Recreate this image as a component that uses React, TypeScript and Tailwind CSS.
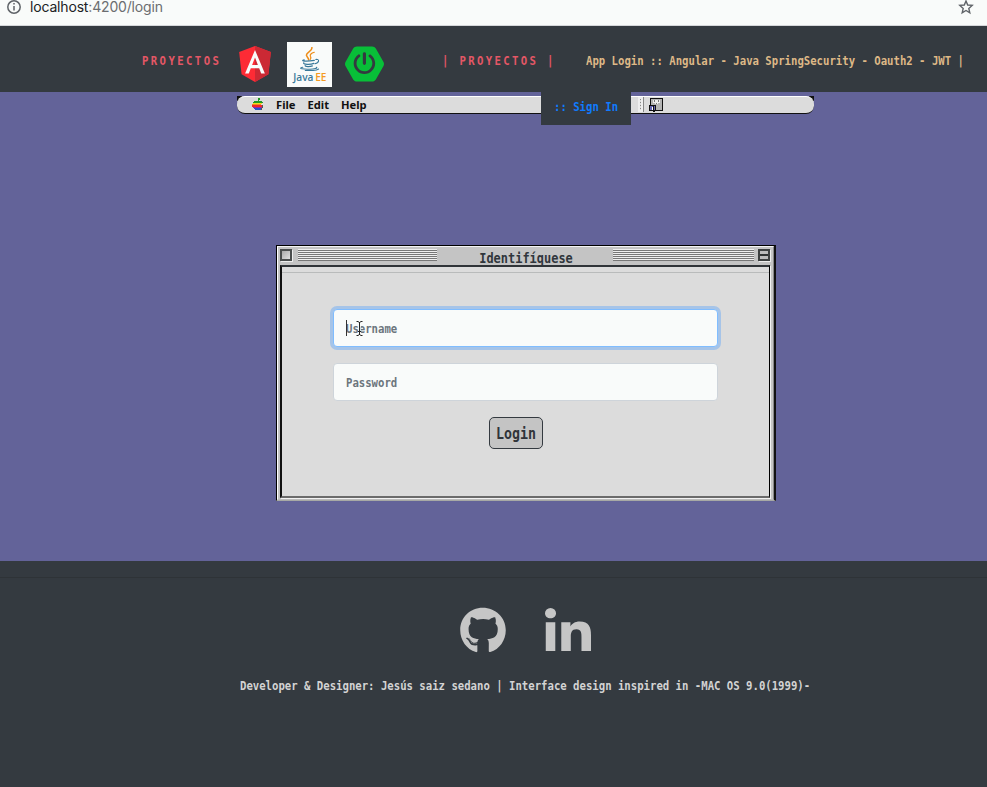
import { ReactNode } from "react";
import { FaGithub, FaLinkedinIn } from "react-icons/fa";
import { SiSpringboot } from "react-icons/si";

// Narrow terminal lettering: a monospaced face stretched vertically.
function Term({ children, className = "" }: { children: ReactNode; className?: string }) {
  return (
    <span
      className={`inline-block scale-y-[1.15] whitespace-pre font-['DejaVu_Sans_Mono',monospace] text-[10.65px] leading-4 font-bold ${className}`}
    >
      {children}
    </span>
  );
}

function AngularLogo() {
  return (
    <svg viewBox="31 30 188 200" className="h-9 w-8" preserveAspectRatio="none">
      <path fill="#fd2b35" d="M125 30 31.9 63.2l14.2 123.1L125 230l78.9-43.7 14.2-123.1z" />
      <path fill="#cb2934" d="M125 30v200l78.9-43.7 14.2-123.1z" />
      <path fill="#f9fbfa" d="M125 52.1 66.8 182.6h21.7l11.7-29.2h49.4l11.7 29.2H183zm17 83.3h-34l17-40.9z" />
    </svg>
  );
}

function JavaLogo() {
  return (
    <div className="flex h-[45px] w-[45px] flex-col items-center bg-[#f9fbfa] pt-[5px]">
      <svg viewBox="0 0 28 25" className="h-[24px] w-7 shrink-0 -translate-x-px" fill="none" strokeLinecap="round">
        <g stroke="#ee8d18">
          <path strokeWidth="1.6" d="M17 .5c1 4-7 5-5.500 8.500.4 1.500 2 2.200 2.200 4.500" />
          <path strokeWidth="1.3" d="M19.500 5.500c-3 1-5 2.300-4 4.200.7 1.200 1 2-.2 3.200" />
        </g>
        <g stroke="#39799a">
          <path strokeWidth="1.3" d="M9 13.500c-5 1.300 3 1.800 10.500.4M8.500 16.500c-1 1.800 7 2 10.500.6M10 19.300c0 1.300 5 1.300 7.500.4" />
          <path strokeWidth="1.1" d="M21 13c4-.8 4.200 3.200-.8 4.500M7.500 21.200c-6 1.300 1.500 2.200 7.500 1.900 4 0 9-1 6.500-1.900M10 24.400c6 .4 12 0 14-1.500" />
        </g>
      </svg>
      <div className="-mt-px scale-x-[.88] font-['Open_Sans',sans-serif] text-[11.500px] leading-[14px] font-semibold whitespace-nowrap text-[#39799a]">
        Java <span className="-ml-px text-[#f59a22]">EE</span>
      </div>
    </div>
  );
}

function AppleLogo() {
  return (
    <svg viewBox="0 0 12 14" className="h-[13px] w-[11px]" shapeRendering="crispEdges">
      <path fill="#229a25" d="M6 3V1h1V0h2v2H8v1h3v1h1v1H1V4h1V3z" />
      <path fill="#f1dc22" d="M1 5h10v1H1z" />
      <path fill="#f58b22" d="M0 6h10v2H0z" />
      <path fill="#ef2929" d="M0 8h11v2H0z" />
      <path fill="#9a24a7" d="M1 10h11v1H1z" />
      <path fill="#2854c8" d="M2 11h9v1h-1v1H7v-1H6v1H3v-1H2z" />
      <path fill="#555" d="M11 8h1v3h-1zM10 11h1v2h-1z" />
    </svg>
  );
}

function FinderIcon() {
  return (
    <svg viewBox="0 0 14 14" className="h-[14px] w-[14px]" shapeRendering="crispEdges">
      <path fill="#111" d="M1 0h13v13H6v1H5v-1H0V7h1z" />
      <path fill="#b4b4b4" d="M2 1h11v11H7V7H2z" />
      <path fill="#eee" d="M4 2h7v3H9v1H6V5H4z" />
      <path fill="#777" d="M5 2h1v2H5zM9 2h1v2H9zM7 5h1v1H7z" />
      <path fill="#6666b5" d="M1 8h5v4H1z" />
      <path fill="#fff" d="M3 9h1v3H3z" />
      <path fill="#111" d="M4 8h1v6H4z" />
    </svg>
  );
}

function Stripes({ className }: { className: string }) {
  return (
    <div
      className={`h-[12px] bg-[repeating-linear-gradient(to_bottom,#eee_0px,#eee_1px,#777_1px,#777_2px)] ${className}`}
    />
  );
}

function LoginWindow() {
  return (
    <section className="flex h-[256px] w-[500px] flex-col border-y border-r-2 border-l border-t-black border-r-[#111] border-b-[#a7a9a5] border-l-black bg-[#c4c4c4]">
      <div className="flex min-h-0 flex-1 flex-col border border-t-[#f4f4f4] border-r-[#888] border-b-[#bbb] border-l-white">
        <header className="flex h-[18px] shrink-0 items-start pt-[2px] pr-[3px] pl-[2px]">
          <div className="h-3 w-3 shrink-0 border-2 border-[#4a4d4d] bg-gradient-to-br from-[#aaa] to-[#e0e0e0] shadow-[1px_1px_0_#eee]" />
          <Stripes className="ml-[6px] w-[139px]" />
          <div className="flex flex-1 justify-center pt-px pl-[2px]">
            <span className="inline-block scale-y-[1.15] font-['DejaVu_Sans_Mono',monospace] text-[11.96px] leading-4 font-bold text-[#30363c]">
              Identifíquese
            </span>
          </div>
          <Stripes className="w-[141px]" />
          <div className="ml-[4px] flex h-3 w-3 shrink-0 items-center border-2 border-[#3d4040] bg-[#bbb] shadow-[1px_1px_0_#eee]">
            <div className="h-[2px] w-full bg-[#303333]" />
          </div>
        </header>
        <div className="mr-[3px] mb-px ml-[2px] flex min-h-0 flex-1 flex-col border-t-2 border-r border-b-2 border-l-2 border-t-[#303438] border-r-black border-b-[#6b6b6b] border-l-[#111] bg-[#dcdcdc] shadow-[1px_1px_0_#f2f2f2]">
          <div className="h-[6px] shrink-0 border-b border-[#b9bbbb]" />
          <form className="flex flex-col items-center pt-[36px]" onSubmit={(e) => e.preventDefault()}>
            <label className="relative flex h-[38px] w-[385px] items-center rounded-[4px] border border-[#80bdff] bg-[#f9fbfa] pt-[3px] pl-[12px] text-[#6c757d] shadow-[0_0_0_3px_#a6c4e8]">
              <Term>Username</Term>
              <span className="absolute top-[10px] left-[12px] h-4 w-px bg-[#333]" />
              <svg viewBox="0 0 7 15" className="absolute top-[11px] left-[22px] h-[15px] w-[7px]" fill="none">
                <path stroke="#f9fbfa" strokeWidth="2.500" d="M3.500 1.500v12" />
                <path stroke="#222" d="M.500.500h1.500l1.500 1 1.500-1H6.500M3.500 1v13M.500 14.500H2l1.500-1 1.500 1h1.500M2 10.500h3" />
              </svg>
            </label>
            <label className="mt-4 flex h-[38px] w-[385px] items-center rounded-[4px] border border-[#ced4da] bg-[#f9fbfa] pt-[3px] pl-[12px] text-[#6c757d]">
              <Term>Password</Term>
            </label>
            <button className="mt-4 mr-[19px] flex h-8 w-[54px] items-center justify-center rounded-[5px] border border-[#343a40] bg-[#c4c4c4] pt-px">
              <span className="inline-block scale-y-[1.15] font-['DejaVu_Sans_Mono',monospace] text-[13.3px] leading-5 font-bold text-[#30343a]">
                Login
              </span>
            </button>
          </form>
        </div>
      </div>
    </section>
  );
}

export default function App() {
  return (
    <div className="flex h-[787px] w-[987px] flex-col overflow-hidden bg-[#343a40]">
      <div className="flex h-[26px] shrink-0 items-start justify-between border-b border-[#d5d7da] bg-[#f9fbfa] pr-[13px] pl-[7px]">
        <div className="flex items-start">
          <svg viewBox="0 0 14 14" className="h-[14px] w-[14px]" fill="none" stroke="#5f6368" strokeWidth="1.500">
            <circle cx="7" cy="7" r="6.200" />
            <path d="M7 6v4.500M7 3v1.500" />
          </svg>
          <span className="ml-[9px] font-[Inter,Roboto,sans-serif] text-[14px] leading-[14px] tracking-[-.17px] text-[#202124]">
            localhost<span className="text-[#6b6d70]">:4200/login</span>
          </span>
        </div>
        <svg viewBox="0 0 16 16" className="h-4 w-4 -translate-y-px" fill="none" stroke="#5f6368" strokeWidth="1.400">
          <path d="m8 2 1.700 4 4.500.4-3.400 3 1 4.400L8 11.500l-3.800 2.300 1-4.400-3.400-3L6.300 6z" />
        </svg>
      </div>

      <nav className="flex h-[66px] shrink-0 items-start">
        <Term className="mt-[28px] ml-[142px] w-[97px] tracking-[2.400px] text-[#e45766]">PROYECTOS</Term>
        <div className="mt-[20px] w-[48px]"><AngularLogo /></div>
        <div className="mt-[16px]"><JavaLogo /></div>
        <SiSpringboot className="mt-[18px] ml-[13px] h-[40px] w-[39px] text-[#08bf38]" />
        <Term className="mt-[28px] ml-[58px] w-[144px] tracking-[2.350px] text-[#e45766]">| PROYECTOS |</Term>
        <Term className="mt-[28px] text-[#deb887]">App Login :: Angular - Java SpringSecurity - Oauth2 - JWT |</Term>
      </nav>

      <main className="flex h-[469px] shrink-0 flex-col bg-[#636399] pt-1">
        <div className="ml-[237px] h-[18px] w-[577px] bg-[linear-gradient(to_right,#111_5px,transparent_5px,transparent_572px,#111_572px)] bg-[length:100%_5px] bg-no-repeat">
          <div className="flex h-[18px] items-start rounded-[8px] border-t border-b border-t-white border-b-[#111] bg-[#dcdcdc] pl-[15px]">
            <div className="mt-px"><AppleLogo /></div>
            <div className="flex w-[278px] shrink-0 gap-[12px] pl-[13px] font-['Noto_Sans','Open_Sans',sans-serif] text-[11.200px] leading-4 font-bold text-[#111]">
              <span>File</span>
              <span>Edit</span>
              <span>Help</span>
            </div>
            <a className="-mt-[5px] flex h-[33px] w-[90px] shrink-0 items-center pb-px bg-[#343a40] pl-[13px] text-[#0f7bff]">
              <Term>:: Sign In</Term>
            </a>
            <div className="ml-[7px] h-[15px] w-[6px] border-r border-[#888] bg-[#eee] pt-[2px] pl-[2px]">
              <div className="h-[11px] w-px bg-[repeating-linear-gradient(#888_0px,#888_1px,#ddd_1px,#ddd_3px)]" />
            </div>
            <div className="mt-px ml-[5px]"><FinderIcon /></div>
          </div>
        </div>
        <div className="mt-[131px] ml-[276px]"><LoginWindow /></div>
      </main>

      <footer className="flex flex-1 flex-col bg-[#343a40]">
        <div className="h-[17px] shrink-0 border-b border-[#2e3337]" />
        <div className="flex h-[80px] text-[#c6c6c6]">
          <FaGithub className="mt-[29px] ml-[460px] h-[47px] w-[46px]" />
          <FaLinkedinIn className="mt-[30px] ml-[39px] h-[49px] w-[46px]" preserveAspectRatio="none" />
        </div>
        <Term className="mt-[21px] ml-[240px] text-[#d3d3d3]">
          Developer &amp; Designer: Jesús saiz sedano | Interface design inspired in -MAC OS 9.0(1999)-
        </Term>
      </footer>
    </div>
  );
}
